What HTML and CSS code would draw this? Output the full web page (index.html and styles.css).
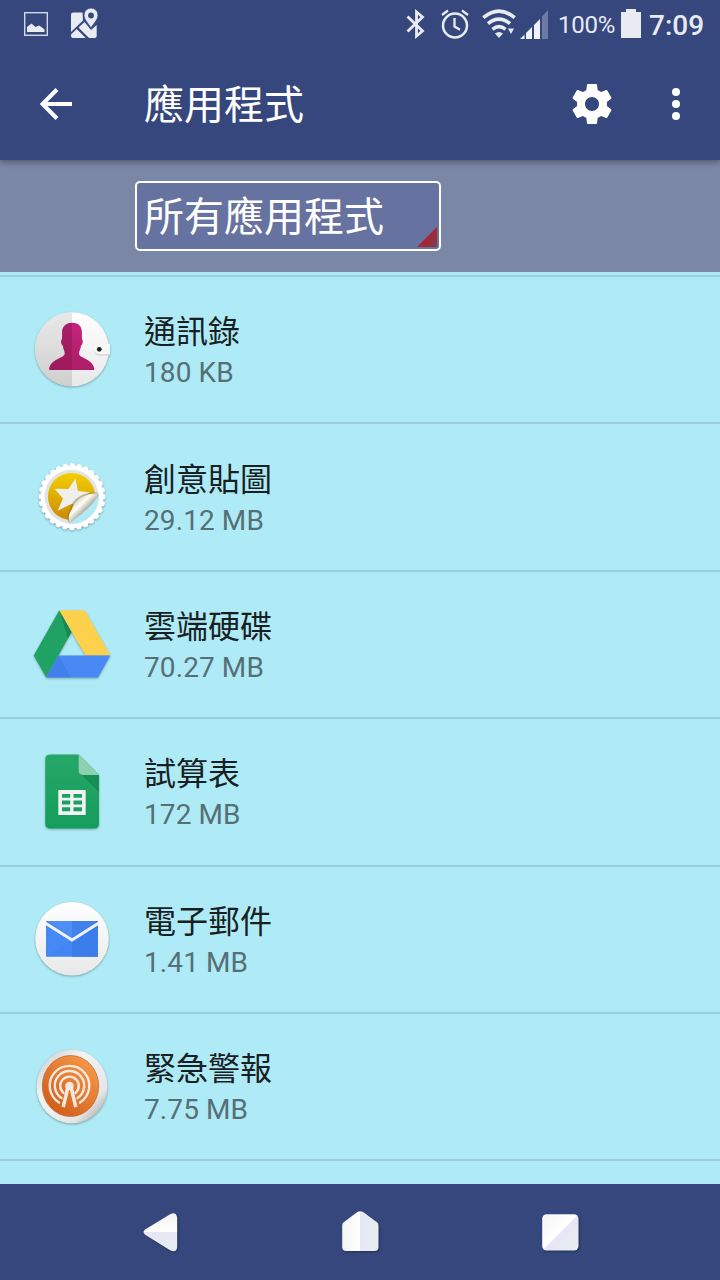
FILE: index.html
```
<!DOCTYPE html>
<html lang="zh-Hant">
  <head>
    <meta charset="UTF-8" />
    <meta name="viewport" content="width=device-width, initial-scale=1.0" />
    <title>應用程式</title>
    <link rel="stylesheet" href="styles.css">
  </head>
  <body>
    <div class="status-bar">
      <svg class="status-photo" width="24" height="24" viewBox="0 0 24 24">
        <rect x="0.7" y="0.7" width="22.6" height="22.6" fill="none" stroke="#d3d7e4" stroke-width="1.4" />
        <path d="M3 20v-5l4.500-3.500 4 3.500 3.500-1.500 3 2 2.500 2V20z" fill="#e9ebf3" />
      </svg>
      <svg class="status-map" width="28" height="30" viewBox="0 0 28 30">
        <path d="M2 4.500H11.500L12 12.500 0 24V6.500q0-2 2-2z" fill="#e9ebf3" />
        <path d="M0 26.500l5.700-5.500 9 9H2Q0 30 0 28zM7.500 19.500l6-5.500L20 22l5.700-5v11q0 2-2 2h-5.700z" fill="#e9ebf3" />
        <path d="M20 0a7 7 0 0 1 7 7.200c0 4.300-4 7.800-7 12.800-3-5-7-8.500-7-12.800A7 7 0 0 1 20 0z" fill="#e9ebf3" stroke="#35477d" stroke-width="0.800" />
        <circle cx="20" cy="7.500" r="2.900" fill="#35477d" />
      </svg>

      <div class="status-right">
        <svg class="status-bluetooth" width="20" height="30" viewBox="0 0 20 30">
          <path d="M1.500 7.500L16.500 22 10.500 27V3l6 5L1.500 22.500" fill="none" stroke="#e9ebf3" stroke-width="2.800" />
        </svg>
        <svg class="status-alarm" width="28" height="30" viewBox="0 0 28 30">
          <circle cx="14" cy="16.500" r="12" fill="none" stroke="#e9ebf3" stroke-width="2.500" />
          <path d="M13.500 9v8.500l5.500 3.300M1 6l6-4.500M21 1.500L27 6" fill="none" stroke="#e9ebf3" stroke-width="2.300" />
        </svg>
        <svg class="status-wifi" width="34" height="30" viewBox="0 0 34 30">
          <g fill="none" stroke="#e9ebf3" stroke-width="3.600">
            <path d="M1.300 8.700Q17-4.500 32.700 8.700" />
            <path d="M6 14.700Q17 5.500 28 14.700" />
            <path d="M10.500 20.300Q17 15 23.500 20.300" />
          </g>
          <path d="M13 24.500q4-3 8 0L17 29z" fill="#e9ebf3" />
          <path d="M26 19.500h6L29 25z" fill="#e9ebf3" />
        </svg>
        <svg class="status-signal" width="28" height="29" viewBox="0 0 28 29">
          <path d="M0 29l4.500-4.500V29zM6 23l6-6v12H6zM14 15l6-6v20h-6z" fill="#f0f2f7" />
          <path d="M22 6.500L28 0v29h-6z" fill="#6c7ba6" />
        </svg>
        <span class="battery-text">100%</span>
        <svg class="status-battery" width="20" height="29" viewBox="0 0 20 29">
          <path d="M0 3h5V0h10v3h5v26H0z" fill="#e9ebf3" />
        </svg>
        <span class="clock">7:09</span>
      </div>
    </div>

    <header class="app-bar">
      <svg class="back-icon" width="34" height="32" viewBox="0 0 34 32">
        <path d="M33 16H4M18 1.500L3.500 16 18 30.500" fill="none" stroke="#fff" stroke-width="4" />
      </svg>
      <h1>應用程式</h1>
      <svg class="settings-icon" width="48" height="48" viewBox="0 0 24 24">
        <path fill="#fff" d="M19.430 12.980c.04-.32.07-.64.07-.98s-.03-.66-.07-.98l2.110-1.650c.19-.15.24-.42.12-.64l-2-3.460c-.12-.22-.39-.3-.61-.22l-2.490 1c-.52-.4-1.080-.73-1.690-.98l-.38-2.650C14.460 2.180 14.250 2 14 2h-4c-.25 0-.46.18-.49.42l-.38 2.650c-.61.25-1.170.59-1.690.98l-2.490-1c-.23-.09-.49 0-.61.22l-2 3.460c-.13.22-.07.49.12.64l2.110 1.650c-.04.32-.07.65-.07.98s.03.66.07.98l-2.110 1.650c-.19.15-.24.42-.12.64l2 3.460c.12.22.39.3.61.22l2.490-1c.52.4 1.080.73 1.690.98l.38 2.650c.03.24.24.42.49.42h4c.25 0 .46-.18.49-.42l.38-2.650c.61-.25 1.170-.59 1.690-.98l2.490 1c.23.09.49 0 .61-.22l2-3.460c.12-.22.07-.49-.12-.64l-2.110-1.650zM12 15.500c-1.930 0-3.500-1.570-3.500-3.500s1.570-3.500 3.500-3.500 3.500 1.570 3.500 3.500-1.570 3.500-3.500 3.500z" />
      </svg>
      <svg class="more-icon" width="8" height="32" viewBox="0 0 8 32">
        <circle cx="4" cy="4" r="4" fill="#fff" />
        <circle cx="4" cy="16" r="4" fill="#fff" />
        <circle cx="4" cy="28" r="4" fill="#fff" />
      </svg>
    </header>

    <div class="filter-bar">
      <div class="filter-select">
        <span>所有應用程式</span>
        <svg width="20" height="20" viewBox="0 0 20 20">
          <defs>
            <linearGradient id="corner" x1="0" y1="0" x2="1" y2="1">
              <stop offset="0.45" stop-color="#b31f2e" />
              <stop offset="0.9" stop-color="#833a49" />
            </linearGradient>
          </defs>
          <path d="M20 0v20H0z" fill="url(#corner)" />
        </svg>
      </div>
    </div>

    <ul class="app-list">
      <li class="app-row">
        <svg class="app-icon" viewBox="0 0 80 80">
          <defs>
            <linearGradient id="contactsLeft" x1="0" y1="0" x2="0" y2="1">
              <stop offset="0" stop-color="#e9e9e9" />
              <stop offset="1" stop-color="#cfcfcf" />
            </linearGradient>
            <linearGradient id="contactsRight" x1="0" y1="0" x2="0" y2="1">
              <stop offset="0" stop-color="#fff" />
              <stop offset="1" stop-color="#e8e8e8" />
            </linearGradient>
            <linearGradient id="person" x1="0" y1="0" x2="0" y2="1">
              <stop offset="0" stop-color="#c3237f" />
              <stop offset="1" stop-color="#ad1d67" />
            </linearGradient>
          </defs>
          <circle cx="40" cy="39.300" r="37" fill="url(#contactsRight)" />
          <path d="M40 2.300a37 37 0 0 0 0 74z" fill="url(#contactsLeft)" />
          <path d="M40.700 12.700c6 0 9.200 4 9.200 9.500v7c1.500 1 1 5-.8 6.300-.5 4-2.100 5.500-2.100 8 0 5 15.300 5.500 15.300 16.500h-45c0-11 15.500-11.500 15.500-16.500 0-3-1.400-4-2-8-1.800-1.300-2.200-5.300-.7-6.300v-7c0-5.500 4-9.500 10.600-9.500z" fill="url(#person)" />
          <path d="M40 12.700c-6 0-9.900 4-9.900 9.500v7c-1.500 1-1.100 5 .7 6.300.6 4 2 5 2 8 0 5-15.500 5.500-15.500 16.500H40z" fill="#90184f" opacity="0.5" />
          <path d="M78 34H67q-5 .5-5 5.300t5 5.300h11z" fill="#cfcfcf" transform="translate(0 1)" />
          <path d="M78 33.700H67q-5 .5-5 5.300t5 5.300h11z" fill="#f7f7f7" />
          <circle cx="67.300" cy="39.300" r="2.400" fill="#202020" />
        </svg>
        <div class="app-info">
          <p class="app-name">通訊錄</p>
          <p class="app-size">180 KB</p>
        </div>
      </li>

      <li class="app-row">
        <svg class="app-icon" viewBox="0 0 80 80">
          <defs>
            <linearGradient id="sticker" x1="0" y1="0" x2="0" y2="1">
              <stop offset="0" stop-color="#f2d000" />
              <stop offset="1" stop-color="#cc8908" />
            </linearGradient>
            <linearGradient id="peel" x1="0" y1="0" x2="1" y2="1">
              <stop offset="0.15" stop-color="#bdbbb2" />
              <stop offset="0.38" stop-color="#fffef5" />
              <stop offset="0.6" stop-color="#97978f" />
            </linearGradient>
          </defs>
          <circle cx="40" cy="39.700" r="31.500" fill="#fff" />
          <circle cx="40" cy="39.700" r="31" fill="none" stroke="#fff" stroke-width="5.200" stroke-linecap="round" stroke-dasharray="0.100 6.856" />
          <circle cx="39.500" cy="39.700" r="27" fill="#e3e3e1" />
          <circle cx="39.500" cy="39.500" r="23.600" fill="url(#sticker)" />
          <path d="M43.500 21.500l2.300 12.200 12.200 1.800-10.500 6.300 1.500 12.700-8.800-8L25.700 53.700 31 41.500l-8.500-9.700 14 .2z" fill="#f0efec" />
          <path d="M67 37.300A27.200 27.200 0 0 1 37 66.700z" fill="#b1e9f4" />
          <path d="M67.300 36.700L37.300 66.500c-1-6 .2-11 2.200-14.500C42 42 54 35 67.300 36.700z" fill="#746b35" opacity="0.45" transform="translate(-1.200 -1)" />
          <path d="M67.300 36.700C63 46 49 58 37.300 66.500c-1-6-.5-10 2.200-13.500C42.500 42 54 35 67.300 36.700z" fill="url(#peel)" />
        </svg>
        <div class="app-info">
          <p class="app-name">創意貼圖</p>
          <p class="app-size">29.12 MB</p>
        </div>
      </li>

      <li class="app-row">
        <svg class="app-icon" viewBox="0 0 80 80">
          <path d="M27.300 6.200l12.200 21.700L14.200 73.500 1.700 51.500z" fill="#20a264" />
          <path d="M27.300 6.200l12.200 21.700-3.600 6.600z" fill="#168a50" />
          <path d="M27.300 6.200h25.400l25.600 45.300H53.500z" fill="#fed14c" />
          <path d="M26.500 51.500h51.800L66 73.500H14.200z" fill="#4889f4" />
          <path d="M26.500 51.500L14.200 73.500H39z" fill="#3872dc" opacity="0.4" />
        </svg>
        <div class="app-info">
          <p class="app-name">雲端硬碟</p>
          <p class="app-size">70.27 MB</p>
        </div>
      </li>

      <li class="app-row">
        <svg class="app-icon" viewBox="0 0 80 80">
          <defs>
            <linearGradient id="sheet" x1="0" y1="0" x2="0" y2="1">
              <stop offset="0" stop-color="#26a768" />
              <stop offset="1" stop-color="#149d5b" />
            </linearGradient>
          </defs>
          <path d="M18.300 2.500h28.400L67 22.900v48.600q0 5-5 5H18.300q-5 0-5-5v-64q0-5 5-5z" fill="url(#sheet)" />
          <path d="M48.500 21.700L67 40.200V22.900z" fill="#128650" opacity="0.7" />
          <path d="M46.700 2.500L67 22.900H51q-4.300 0-4.300-4.300z" fill="#8ed1b1" />
          <path fill-rule="evenodd" d="M26.300 38h27.400v25H26.300zM30 42v3.700h8.200V42zm11.500 0v3.700h8.500V42zM30 48.500v4h8.200v-4zm11.500 0v4h8.500v-4zM30 55.300v3.900h8.200v-3.900zm11.500 0v3.900h8.500v-3.900z" fill="#f1f3f2" />
        </svg>
        <div class="app-info">
          <p class="app-name">試算表</p>
          <p class="app-size">172 MB</p>
        </div>
      </li>

      <li class="app-row">
        <svg class="app-icon" viewBox="0 0 80 80">
          <defs>
            <linearGradient id="mailDisc" x1="0" y1="0" x2="0" y2="1">
              <stop offset="0" stop-color="#fff" />
              <stop offset="1" stop-color="#e9e9e9" />
            </linearGradient>
          </defs>
          <circle cx="40" cy="39.700" r="36.800" fill="url(#mailDisc)" />
          <path d="M14 22h52v35.500H14z" fill="#4688f4" />
          <path d="M40 22h26v35.500H40z" fill="#3c7ded" />
          <path d="M14 57.500l26-17 26 17z" fill="#4285f4" />
          <path d="M40 40.500v17h26z" fill="#3b7bea" />
          <path d="M17 22h46L40 38.500z" fill="#4f8ff5" />
          <path d="M40 22h23L40 38.500z" fill="#4181eb" />
          <path d="M14 22.800v3.400l26 16.500 26-16.500v-3.400L40 39.200z" fill="#f4f4f4" />
        </svg>
        <div class="app-info">
          <p class="app-name">電子郵件</p>
          <p class="app-size">1.41 MB</p>
        </div>
      </li>

      <li class="app-row">
        <svg class="app-icon" viewBox="0 0 80 80">
          <defs>
            <linearGradient id="ring" x1="0" y1="0" x2="1" y2="1">
              <stop offset="0" stop-color="#c8c8c8" />
              <stop offset="0.35" stop-color="#f3f3f3" />
              <stop offset="0.75" stop-color="#e6e6e6" />
              <stop offset="1" stop-color="#8c8c8c" />
            </linearGradient>
            <linearGradient id="orange" x1="0" y1="1" x2="0.800" y2="0">
              <stop offset="0" stop-color="#cc5212" />
              <stop offset="1" stop-color="#f79a48" />
            </linearGradient>
          </defs>
          <ellipse cx="40" cy="39.500" rx="35.500" ry="36.700" fill="url(#ring)" />
          <ellipse cx="38.500" cy="39" rx="28.200" ry="30.500" fill="url(#orange)" stroke="#b9703e" stroke-width="0.800" />
          <g fill="none" stroke="#f5e8df" stroke-width="2.400" stroke-linecap="round">
            <path d="M27 55.500A19.800 19.800 0 1 1 48 55.500" />
            <path d="M29.500 51A14.700 14.700 0 1 1 45.500 51" />
            <path d="M31.500 46A9.300 9.300 0 1 1 43.500 46" />
          </g>
          <circle cx="37.500" cy="39" r="4.300" fill="#f5e8df" />
          <path d="M36 40l-4.800 20M39 40l4.800 20" fill="none" stroke="#f5e8df" stroke-width="3.500" />
        </svg>
        <div class="app-info">
          <p class="app-name">緊急警報</p>
          <p class="app-size">7.75 MB</p>
        </div>
      </li>
    </ul>

    <nav class="nav-bar">
      <svg width="40" height="44" viewBox="0 0 40 44">
        <defs>
          <linearGradient id="navBack" x1="0" y1="0" x2="0" y2="1">
            <stop offset="0" stop-color="#f2f2f4" />
            <stop offset="0.49" stop-color="#fff" />
            <stop offset="0.5" stop-color="#e8e6f5" />
            <stop offset="1" stop-color="#e4eeee" />
          </linearGradient>
        </defs>
        <path d="M5.500 19.200L30.500 3.900q6-2.500 6.700 4v29q-.5 6-6.700 3.500L5.500 25q-4-3 0-5.800z" fill="url(#navBack)" />
      </svg>
      <svg width="40" height="44" viewBox="0 0 40 44">
        <defs>
          <linearGradient id="navHome" x1="0" y1="0" x2="1" y2="0">
            <stop offset="0" stop-color="#f4f4f5" />
            <stop offset="0.49" stop-color="#fff" />
            <stop offset="0.5" stop-color="#e8e6f5" />
            <stop offset="1" stop-color="#e5eeee" />
          </linearGradient>
        </defs>
        <path d="M17 2.200q3-2 6.500 0L37 12.200q1.500 1 1.500 3V37q0 4-4 4H6.200q-4 0-4-4V15.200q0-2 1.500-3z" fill="url(#navHome)" />
      </svg>
      <svg width="40" height="44" viewBox="0 0 40 44">
        <defs>
          <linearGradient id="navRecent" x1="0" y1="0" x2="1" y2="1">
            <stop offset="0" stop-color="#f4f4f5" />
            <stop offset="0.49" stop-color="#fff" />
            <stop offset="0.51" stop-color="#e8e6f5" />
            <stop offset="1" stop-color="#e5eeee" />
          </linearGradient>
        </defs>
        <rect x="2.200" y="4.200" width="36.300" height="36.300" rx="4.500" fill="url(#navRecent)" />
      </svg>
    </nav>
  </body>
</html>
```
FILE: styles.css
```
* {
  margin: 0;
  padding: 0;
  box-sizing: border-box;
}

body {
  width: 720px;
  height: 1280px;
  display: flex;
  flex-direction: column;
  overflow: hidden;
  background: #afebf6;
  font-family: Roboto, "Noto Sans CJK TC", sans-serif;
}

svg {
  display: block;
  flex-shrink: 0;
}

.status-bar {
  height: 48px;
  flex-shrink: 0;
  display: flex;
  align-items: center;
  padding: 0 16px 0 24px;
  background: #35477d;
  color: #e9ebf3;
}

.status-map {
  margin-left: 23px;
  margin-top: -2px;
}

.status-right {
  display: flex;
  align-items: center;
  margin-left: auto;
}

.status-alarm {
  margin-left: 15px;
}

.status-wifi {
  margin-left: 13px;
}

.status-signal {
  margin-left: 4px;
  margin-top: 1px;
}

.battery-text {
  width: 57px;
  margin-left: 10px;
  margin-top: 2px;
  font-size: 24px;
  letter-spacing: -0.2px;
}

.status-battery {
  margin-left: 6px;
  margin-top: -1px;
}

.clock {
  width: 55px;
  margin-left: 8px;
  margin-top: 2px;
  font-size: 28px;
  font-weight: 500;
}

.app-bar {
  height: 112px;
  flex-shrink: 0;
  display: flex;
  align-items: center;
  padding: 0 40px 0 39px;
  background: #35477d;
  color: white;
  box-shadow: 0 1px 7px rgba(0, 0, 0, 0.45);
  clip-path: inset(0 0 -12px 0);
  z-index: 1;
}

.app-bar h1 {
  flex: 1;
  margin-left: 71px;
  padding-top: 4px;
  font-size: 40px;
  font-weight: 400;
  line-height: 56px;
}

.more-icon {
  margin-left: 56px;
}

.filter-bar {
  height: 112px;
  flex-shrink: 0;
  display: flex;
  align-items: center;
  padding-left: 135px;
  background: #7b87a7;
}

.filter-select {
  width: 306px;
  height: 70px;
  display: flex;
  align-items: flex-end;
  justify-content: space-between;
  padding: 0 2px 2px 7px;
  border: 2px solid white;
  border-radius: 5px;
  background: #66729f;
  color: white;
  font-size: 40px;
  line-height: 58px;
}

.app-list {
  flex: 1;
  min-height: 0;
  overflow: hidden;
  padding-top: 3px;
  list-style: none;
}

.app-row {
  height: 147.4px;
  display: flex;
  align-items: center;
  padding-left: 32px;
  border-top: 2px solid #9acfda;
}

.app-row:last-child {
  height: 149.4px;
  border-bottom: 2px solid #9acfda;
}

.app-icon {
  width: 80px;
  height: 80px;
  filter: drop-shadow(0 1px 1px rgba(0, 0, 0, 0.3));
}

.app-info {
  margin-left: 32px;
  padding-top: 3px;
}

.app-name {
  color: #192022;
  font-size: 32px;
  line-height: 44px;
}

.app-size {
  color: #566f75;
  font-size: 28px;
  line-height: 38px;
  letter-spacing: 0.1px;
}

.nav-bar {
  height: 96px;
  flex-shrink: 0;
  display: flex;
  align-items: center;
  justify-content: space-between;
  padding: 0 140px;
  background: #35477d;
}

.nav-bar svg {
  filter: drop-shadow(1px 1px 1px rgba(0, 0, 0, 0.35));
}
```
